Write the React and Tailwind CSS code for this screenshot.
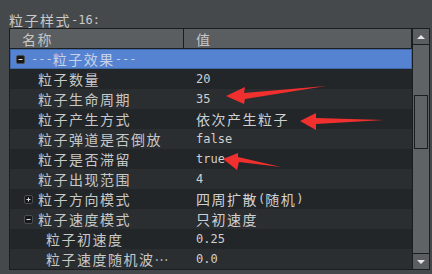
import React from 'react';

// split CJK runs from latin runs so each gets its own font metrics
const CJK = /([\u2026\u3000-\u9fff\uff00-\uffef]+)/;

const Txt = ({ children }) => (
    <>
        {children.split(CJK).filter(Boolean).map((part, i) =>
            CJK.test(part) ? (
                <span key={i} className="font-['Noto_Sans_CJK_SC',sans-serif] text-[14px] leading-[16px] tracking-[1.5px]">{part}</span>
            ) : (
                <span key={i} className="text-[12px] leading-[16px]">{part}</span>
            )
        )}
    </>
);

const Toggle = ({ open }) => (
    <svg width="9" height="9" viewBox="0 0 9 9" className="shrink-0">
        <rect x="0.5" y="0.5" width="8" height="8" rx="1.5" fill="#16181a" stroke="#4a4e51" />
        <path d="M2.5 4.5h4" stroke="#e0e0e0" strokeWidth="1" />
        {!open && <path d="M4.5 2.5v4" stroke="#e0e0e0" strokeWidth="1" />}
    </svg>
);

const rows = [
    { name: '粒子数量', value: '20', pad: 'pl-[28px]' },
    { name: '粒子生命周期', value: '35', pad: 'pl-[28px]' },
    { name: '粒子产生方式', value: '依次产生粒子', pad: 'pl-[28px]' },
    { name: '粒子弹道是否倒放', value: 'false', pad: 'pl-[28px]' },
    { name: '粒子是否滞留', value: 'true', pad: 'pl-[28px]' },
    { name: '粒子出现范围', value: '4', pad: 'pl-[28px]' },
    { name: '粒子方向模式', value: '四周扩散(随机)', pad: 'pl-[14px]', toggle: 'closed' },
    { name: '粒子速度模式', value: '只初速度', pad: 'pl-[14px]', toggle: 'open' },
    { name: '粒子初速度', value: '0.25', pad: 'pl-[36px]' },
    { name: '粒子速度随机波…', value: '0.0', pad: 'pl-[36px]' },
];

const App = () => {
    return (
        <div className="relative w-[432px] h-[274px] overflow-hidden bg-[#45494c] text-[#c8c8c8] font-['DejaVu_Sans_Mono',monospace]">
            <div className="h-[28px] pt-[12px] pl-[9px] text-[#c9c9c9] whitespace-nowrap">
                <div className="h-[16px] flex items-center">
                    <Txt>粒子样式-16:</Txt>
                </div>
            </div>

            <div className="ml-[9px] w-[421px] h-[242px] border border-[#1b1e20] flex">
                {/* tree */}
                <div className="flex-1 flex flex-col">
                    <div className="h-[20px] flex bg-[#5a5e61] border-b border-r border-[#1b1e20] text-[#c6c6c6]">
                        <div className="w-[174px] pl-[12px] flex items-center border-r border-[#1b1e20]">
                            <Txt>名称</Txt>
                        </div>
                        <div className="flex-1 pl-[12px] flex items-center">
                            <Txt>值</Txt>
                        </div>
                    </div>

                    <div className="h-[20px] flex items-center pl-[5px] bg-[#5582d1] border border-[#4169a8] text-[#c8d2e6] whitespace-nowrap">
                        <Toggle open />
                        <span className="ml-[6px] flex items-center"><Txt>---粒子效果---</Txt></span>
                    </div>

                    {rows.map((r, i) => (
                        <div
                            key={r.name}
                            className={`h-[20px] flex items-center whitespace-nowrap ${i % 2 === 0 ? 'bg-[#222629]' : 'bg-[#2a2e31]'}`}
                        >
                            <div className={`w-[173px] flex items-center ${r.pad}`}>
                                {r.toggle && <span className="mr-[5px] flex"><Toggle open={r.toggle === 'open'} /></span>}
                                <Txt>{r.name}</Txt>
                            </div>
                            <div className="flex-1 pl-[13px] flex items-center text-[#d0d0d0]">
                                <Txt>{r.value}</Txt>
                            </div>
                        </div>
                    ))}
                </div>

                {/* scrollbar */}
                <div className="w-[17px] border-l border-[#1b1e20] flex flex-col">
                    <div className="h-[16px] bg-[#5a5e61] border-b border-[#1b1e20] flex items-center justify-center">
                        <div className="w-0 h-0 border-x-[4px] border-x-transparent border-b-[4px] border-b-[#e6e6e6]" />
                    </div>
                    <div className="flex-1 bg-[#5f6365]">
                        <div className="mt-[50px] ml-[1px] w-[14px] h-[54px] border border-[#1b1e20]" />
                    </div>
                    <div className="h-[16px] bg-[#5a5e61] border-t border-[#1b1e20] flex items-center justify-center">
                        <div className="w-0 h-0 border-x-[4px] border-x-transparent border-t-[4px] border-t-[#e6e6e6]" />
                    </div>
                </div>
            </div>

            {/* red annotation arrows */}
            <svg className="absolute inset-0 pointer-events-none" width="432" height="274" viewBox="0 0 432 274">
                <polygon points="226,96 245,87 244,93 326,86 245,99 244,104" fill="#f0302e" />
                <polygon points="300,121 316,113 316,118 384,120 316,124 316,130" fill="#f0302e" />
                <polygon points="223,159 238,153 238,157 281,167 239,162 237,170" fill="#f0302e" />
            </svg>
        </div>
    );
};

export default App;
